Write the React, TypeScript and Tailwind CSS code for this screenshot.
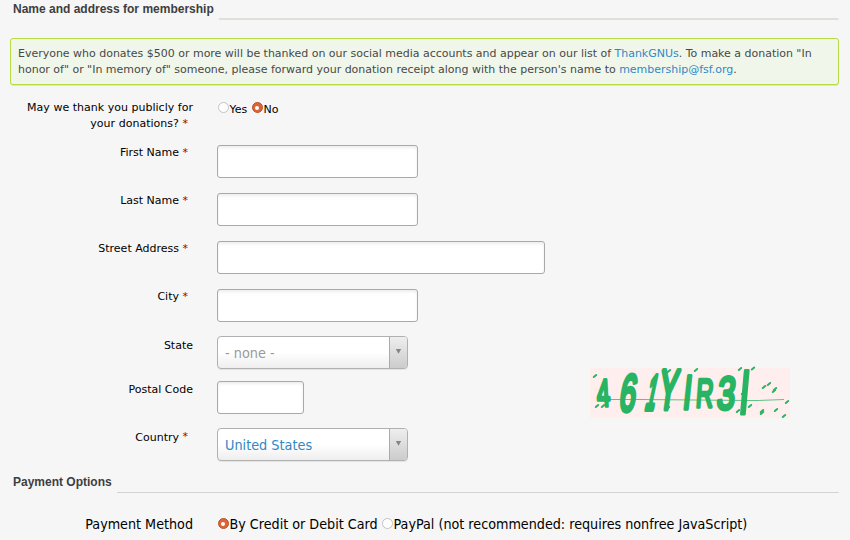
import type { ReactNode } from "react";

function SectionTitle({ children, line }: { children: ReactNode; line: string }) {
  return (
    <div className="flex h-[20px] w-[826px] items-start gap-[5px]">
      <h2 className="shrink-0 whitespace-nowrap font-['Liberation_Sans',sans-serif] text-[12px] font-bold leading-[18px] text-[#3e3e3e]">
        {children}
      </h2>
      <div className={`grow rounded-tr-sm ${line}`} />
    </div>
  );
}

function Row({
  label,
  required,
  height,
  pad = "",
  children,
}: {
  label: ReactNode;
  required?: boolean;
  height: string;
  pad?: string;
  children: ReactNode;
}) {
  return (
    <div className={`flex items-start ${height}`}>
      <div className={`w-[193px] shrink-0 text-right text-[11px] leading-[16px] text-black ${required ? "pr-[5px]" : "pt-px"}`}>
        {label}
        {required && <span className="text-[#990000]"> *</span>}
      </div>
      <div className={`ml-[24px] flex ${pad}`}>{children}</div>
    </div>
  );
}

function TextBox({ width }: { width: string }) {
  return (
    <input
      type="text"
      className={`block h-[33px] rounded-[3px] border border-[#a9a9a9] bg-white shadow-[inset_0_2px_3px_#eeeeee] outline-none ${width}`}
    />
  );
}

function Select({ value, color }: { value: string; color: string }) {
  return (
    <div className="flex h-[33px] w-[191px] overflow-hidden rounded-[4px] border border-[#b0b0b0] bg-linear-to-b from-white from-50% to-[#eeeeee] shadow-[0_1px_0_#e4e4e4]">
      <span
        className={`grow pl-[7px] pt-px font-['DejaVu_Sans_Condensed','DejaVu_Sans',sans-serif] text-[14.3px] font-normal [font-stretch:75%] leading-[31px] ${color}`}
      >
        {value}
      </span>
      <span className="flex w-[18px] justify-center border-l border-[#aaaaaa] bg-linear-to-b from-[#eeeeee] to-[#cccccc] pt-[12px]">
        <svg width="7" height="5" viewBox="0 0 7 5">
          <path d="M0.8 0h5.4L3.5 4.8z" fill="#858585" />
        </svg>
      </span>
    </div>
  );
}

function Radio({ checked, className = "" }: { checked?: boolean; className?: string }) {
  return checked ? (
    <span
      className={`flex size-[11px] shrink-0 items-center justify-center rounded-full border border-[#b9532d] bg-[#dd6437] ${className}`}
    >
      <span className="size-[4px] rounded-full bg-white" />
    </span>
  ) : (
    <span className={`size-[11px] shrink-0 rounded-full border border-[#c3c3c3] bg-white ${className}`} />
  );
}

const glyphs = [
  { c: "4", x: 604, y: 406, s: 38, w: 0.62, k: 3, b: 3.5 },
  { c: "6", x: 626, y: 411, s: 52, w: 0.56, k: -8, b: 4.5 },
  { c: "1", x: 649, y: 409, s: 48, w: 0.36, k: -12, b: 6 },
  { c: "Y", x: 666, y: 409, s: 56, w: 0.5, k: -8, b: 5 },
  { c: "l", x: 686, y: 409, s: 46, w: 0.7, k: -6, b: 3.5 },
  { c: "R", x: 704, y: 407, s: 40, w: 0.6, k: -4, b: 3.5 },
  { c: "3", x: 725, y: 409, s: 46, w: 0.7, k: -6, b: 4 },
  { c: "l", x: 743, y: 414, s: 60, w: 0.7, k: -5, b: 3 },
];

const specks = [
  [595, 376], [597, 406], [603, 406], [669, 371], [668, 408], [696, 370], [740, 369], [753, 368.5],
  [738, 411], [743, 393], [750, 406], [764, 387], [769, 384], [774, 391], [775, 389], [762, 411],
  [762, 413], [776, 410], [787, 402], [784, 416],
];

function Captcha() {
  return (
    <svg className="h-[50px] w-[200px] overflow-visible" viewBox="590 368 200 50">
      <rect x="590" y="368" width="200" height="50" fill="#ffeeee" />
      <g
        fill="#28b463"
        stroke="#28b463"
        strokeLinejoin="round"
        fontFamily="'Liberation Sans', sans-serif"
        textAnchor="middle"
      >
        {glyphs.map((g, i) => (
          <text
            key={i}
            fontSize={g.s}
            strokeWidth={g.b}
            transform={`translate(${g.x} ${g.y}) skewX(${g.k}) scale(${g.w} 1)`}
          >
            {g.c}
          </text>
        ))}
      </g>
      <path d="M610 399.5h30l110 1h8l26-1" fill="none" stroke="#28b463" strokeOpacity="0.75" />
      {specks.map(([x, y], i) => (
        <path key={i} d={`M${x - 1.2} ${y + 1}l2.4 -2`} stroke="#28b463" strokeWidth="2" strokeLinecap="round" />
      ))}
    </svg>
  );
}

export default function App() {
  return (
    <main className="relative h-[540px] w-[850px] overflow-hidden bg-[#f6f6f6] font-['DejaVu_Sans',sans-serif]">
      <div className="pl-[13px]">
        <SectionTitle line="mt-[18px] h-[2px] bg-[#e0e0db]">Name and address for membership</SectionTitle>
      </div>
      <p className="ml-[10px] mt-[18px] h-[47px] w-[829px] whitespace-nowrap rounded-[3px] border border-[#b7dc46] bg-[#f0f7ea] pl-[7px] pt-[7px] text-[11px] leading-[16px] tracking-[-0.016px] text-[#484848] shadow-[0_1px_0_#dcecb4]">
        Everyone who donates $500 or more will be thanked on our social media accounts and appear on our list of{" "}
        <a className="text-[#3088c5]">ThankGNUs</a>. To make a donation "In
        <br />
        honor of" or "In memory of" someone, please forward your donation receipt along with the person's name to{" "}
        <a className="text-[#3088c5]">membership@fsf.org</a>.
      </p>
      <div className="pt-[15px]">
        <div className="flex h-[45px] items-start">
          <div className="w-[193px] text-right text-[11px] leading-[16px] tracking-[0.02px]">
            May we thank you publicly for
            <br />
            <span className="pr-[5px]">
              your donations? <span className="text-[#990000]">*</span>
            </span>
          </div>
          <div className="ml-[24.5px] mt-[2px] flex text-[11px] leading-[16px]">
            <Radio />
            <span className="w-[23px] pl-px">Yes</span>
            <Radio checked />
            <span className="pl-px">No</span>
          </div>
        </div>
        <Row label="First Name" required height="h-[48px]">
          <TextBox width="w-[201px]" />
        </Row>
        <Row label="Last Name" required height="h-[48px]">
          <TextBox width="w-[201px]" />
        </Row>
        <Row label="Street Address" required height="h-[48px]">
          <TextBox width="w-[328px]" />
        </Row>
        <Row label="City" required height="h-[48px]">
          <TextBox width="w-[201px]" />
        </Row>
        <Row label="State" height="h-[44px]" pad="-mt-[1px]">
          <Select value="- none -" color="text-[#999999]" />
        </Row>
        <Row label="Postal Code" height="h-[48px]">
          <TextBox width="w-[87px]" />
        </Row>
        <Row label={<span className="relative top-px">Country</span>} required height="h-[44px]" pad="-mt-[1px]">
          <Select value="United States" color="text-[#3088c5]" />
        </Row>
      </div>
      <div className="pl-[13px]">
        <SectionTitle line="mt-[19px] h-px bg-[#d3d3cf]">Payment Options</SectionTitle>
      </div>
      <div className="mt-[21px] flex font-['DejaVu_Sans_Condensed','DejaVu_Sans',sans-serif] text-[14.2px] leading-[20px] text-black [font-stretch:75%]">
        <div className="w-[193px] text-right">Payment Method</div>
        <div className="ml-[24.5px] flex">
          <Radio checked className="mt-[4px]" />
          <span className="w-[153px] pl-px">By Credit or Debit Card</span>
          <Radio className="mt-[4px]" />
          <span className="pl-px">PayPal (not recommended: requires nonfree JavaScript)</span>
        </div>
      </div>
      <div className="absolute left-[590px] top-[368px]">
        <Captcha />
      </div>
    </main>
  );
}
